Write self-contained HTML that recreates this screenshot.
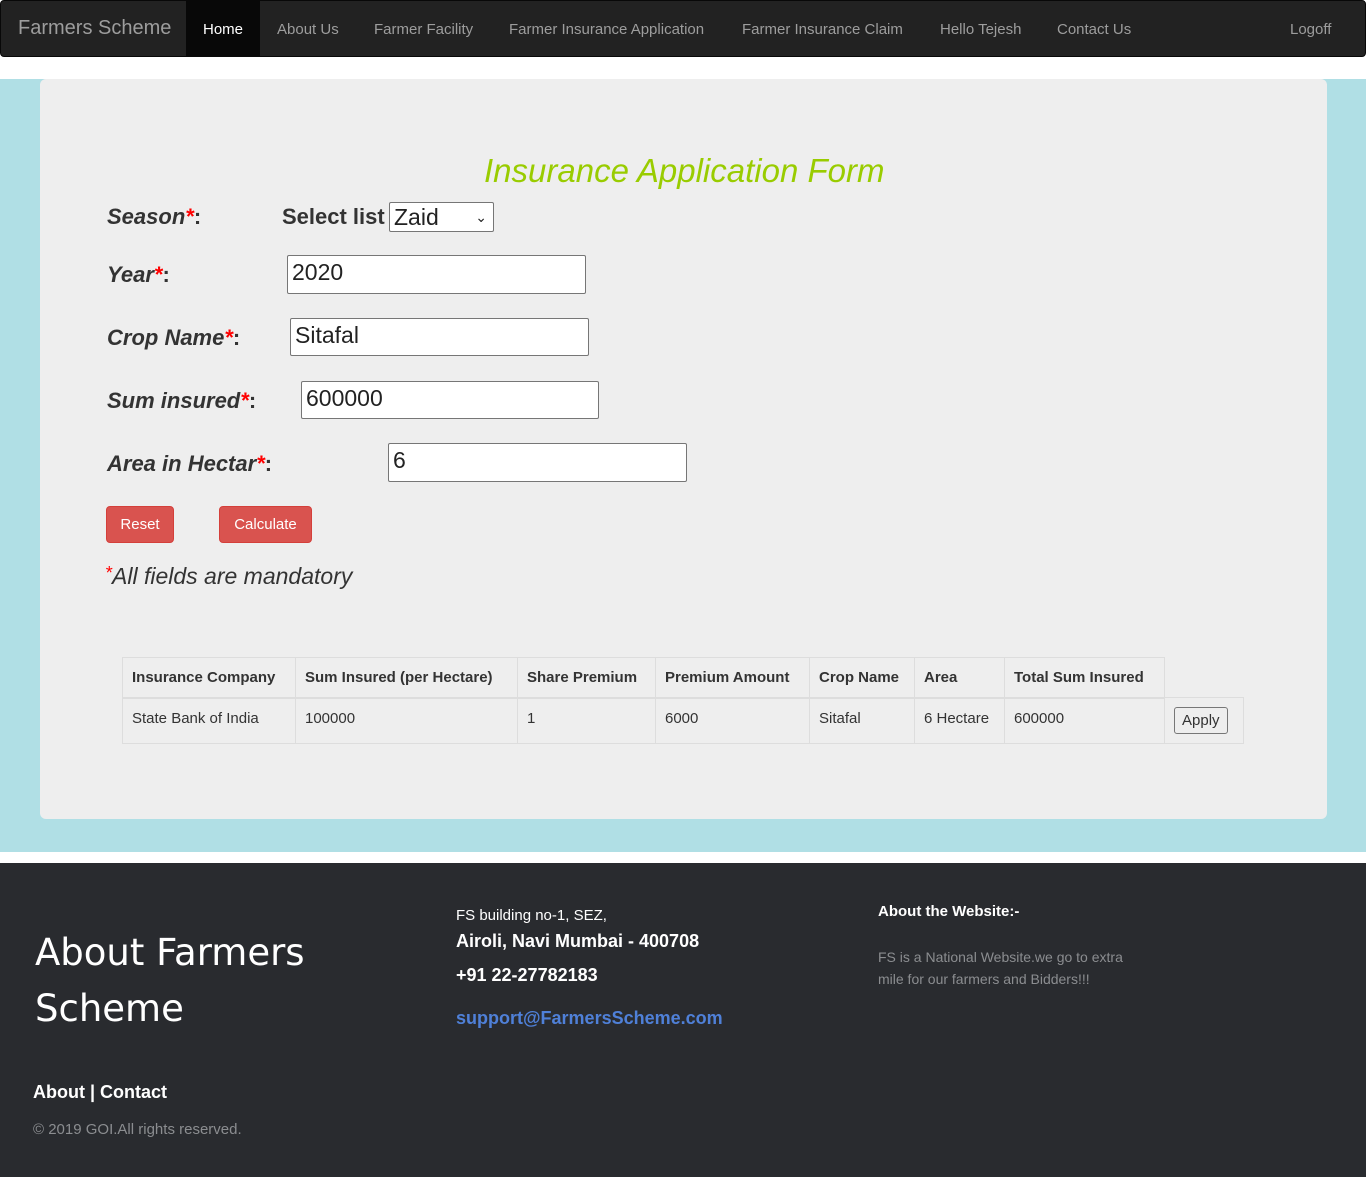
<!DOCTYPE html>
<html><head><meta charset="utf-8">
<style>
*{box-sizing:border-box;margin:0;padding:0}
body{width:1366px;height:1177px;position:relative;background:#fff;font-family:"Liberation Sans",Arial,sans-serif;overflow:hidden;color:#333}
.a{position:absolute;white-space:nowrap}
.nav{position:absolute;left:0;top:0;width:1366px;height:57px;background:#222;border:1px solid #080808;border-radius:4px}
.nl{position:absolute;top:20px;font-size:15px;color:#9d9d9d}
.lbl{position:absolute;font-size:22px;font-weight:bold;font-style:italic;color:#333}
.lbl i{font-style:normal}
.r{color:#f00}
.inp{position:absolute;height:39px;background:#fff;border:1px solid #767676;border-radius:2px;font-size:23px;padding:3px 0 0 4px;color:#222}
.btn{position:absolute;top:506px;height:37px;background:#d9534f;border:1px solid #d43f3a;border-radius:4px;color:#fff;font-size:15px;text-align:center;line-height:35px}
table{position:absolute;left:122px;top:657px;border-collapse:collapse;font-size:15px}
td,th{border:1px solid #ddd;padding:0 9px;text-align:left;height:40px}
th{font-weight:bold;height:40px;border-bottom:2px solid #ddd}
td{height:46px}
</style></head><body>
<div class="nav">
<div class="a" style="left:17px;top:16px;font-size:20px;color:#9d9d9d">Farmers Scheme</div>
<div class="a" style="left:185px;top:0;width:74px;height:55px;background:#080808"></div>
<div class="nl" style="left:202px;color:#fff">Home</div>
<div class="nl" style="left:276px">About Us</div>
<div class="nl" style="left:373px">Farmer Facility</div>
<div class="nl" style="left:508px">Farmer Insurance Application</div>
<div class="nl" style="left:741px">Farmer Insurance Claim</div>
<div class="nl" style="left:939px">Hello Tejesh</div>
<div class="nl" style="left:1056px">Contact Us</div>
<div class="nl" style="left:1289px">Logoff</div>
</div>
<div class="a" style="left:0;top:79px;width:1366px;height:773px;background:#b0dfe5"></div>
<div class="a" style="left:40px;top:79px;width:1287px;height:740px;background:#eee;border-radius:6px"></div>
<div class="a" style="left:484px;top:152px;font-size:33px;font-style:italic;color:#99cc00">Insurance Application Form</div>

<div class="lbl" style="left:107px;top:204px">Season<span class="r">*</span><i>:</i></div>
<div class="a" style="left:282px;top:204px;font-size:22px;font-weight:bold">Select list</div>
<div class="inp" style="left:389px;top:202px;width:105px;height:30px;font-size:23px;padding:0 0 0 4px;line-height:28px">Zaid<span style="position:absolute;right:6px;top:0;font-size:14px">&#8964;</span></div>

<div class="lbl" style="left:107px;top:262px">Year<span class="r">*</span><i>:</i></div>
<div class="inp" style="left:287px;top:255px;width:299px">2020</div>
<div class="lbl" style="left:107px;top:325px">Crop Name<span class="r">*</span><i>:</i></div>
<div class="inp" style="left:290px;top:318px;width:299px;height:38px">Sitafal</div>
<div class="lbl" style="left:107px;top:388px">Sum insured<span class="r">*</span><i>:</i></div>
<div class="inp" style="left:301px;top:381px;width:298px;height:38px">600000</div>
<div class="lbl" style="left:107px;top:451px">Area in Hectar<span class="r">*</span><i>:</i></div>
<div class="inp" style="left:388px;top:443px;width:299px">6</div>

<div class="btn" style="left:106px;width:68px">Reset</div>
<div class="btn" style="left:219px;width:93px">Calculate</div>
<div class="a" style="left:105px;top:563px;font-size:23px;font-style:italic"><span class="r" style="font-size:18px;vertical-align:top">*</span>All fields are mandatory</div>

<table>
<tr><th style="width:173px">Insurance Company</th><th style="width:222px">Sum Insured (per Hectare)</th><th style="width:138px">Share Premium</th><th style="width:154px">Premium Amount</th><th style="width:105px">Crop Name</th><th style="width:90px">Area</th><th style="width:160px">Total Sum Insured</th><th style="border:none;border-bottom:1px solid #ddd;width:79px"></th></tr>
<tr><td style="vertical-align:top;padding-top:11px">State Bank of India</td><td style="vertical-align:top;padding-top:11px">100000</td><td style="vertical-align:top;padding-top:11px">1</td><td style="vertical-align:top;padding-top:11px">6000</td><td style="vertical-align:top;padding-top:11px">Sitafal</td><td style="vertical-align:top;padding-top:11px">6 Hectare</td><td style="vertical-align:top;padding-top:11px">600000</td><td><span style="display:inline-block;border:1px solid #777;border-radius:3px;padding:4px 7px;background:#eee">Apply</span></td></tr>
</table>

<div class="a" style="left:0;top:863px;width:1366px;height:314px;background:#292b2f"></div>
<div class="a" style="left:35px;top:925px;font-size:37px;line-height:56px;color:#fff;font-family:'Comic Sans MS','DejaVu Sans',sans-serif">About Farmers<br>Scheme</div>
<div class="a" style="left:33px;top:1082px;font-size:18px;font-weight:bold;color:#fff">About | Contact</div>
<div class="a" style="left:33px;top:1121px;font-size:15px;color:#8b8d90">© 2019 GOI.All rights reserved.</div>
<div class="a" style="left:456px;top:907px;font-size:15px;color:#fff">FS building no-1, SEZ,</div>
<div class="a" style="left:456px;top:931px;font-size:18px;font-weight:bold;color:#fff">Airoli, Navi Mumbai - 400708</div>
<div class="a" style="left:456px;top:965px;font-size:18px;font-weight:bold;color:#fff">+91 22-27782183</div>
<div class="a" style="left:456px;top:1008px;font-size:18px;font-weight:bold;color:#4f80d8">support@FarmersScheme.com</div>
<div class="a" style="left:878px;top:903px;font-size:15px;font-weight:bold;color:#fff">About the Website:-</div>
<div class="a" style="left:878px;top:946px;font-size:14px;line-height:22px;color:#8b8d90">FS is a National Website.we go to extra<br>mile for our farmers and Bidders!!!</div>
</body></html>
